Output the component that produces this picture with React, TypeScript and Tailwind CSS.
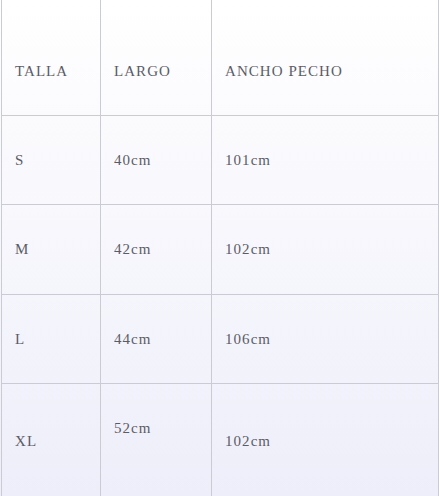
import React from "react";

type Row = { talla: string; largo: string; pecho: string; tall?: boolean };

const rows: Row[] = [
  { talla: "S", largo: "40cm", pecho: "101cm" },
  { talla: "M", largo: "42cm", pecho: "102cm" },
  { talla: "L", largo: "44cm", pecho: "106cm" },
  { talla: "XL", largo: "52cm", pecho: "102cm", tall: true },
];

const font = "font-['Liberation_Serif',serif] text-[15px] tracking-[0.07em] text-[#5c5c66]";

function Cell({
  children,
  className = "",
}: {
  children: React.ReactNode;
  className?: string;
}) {
  return (
    <div className={`flex items-center border-l border-[#cbcbd3] pl-[13px] ${className}`}>
      <span className={font}>{children}</span>
    </div>
  );
}

export default function App() {
  return (
    <div className="h-[496px] w-[439px] overflow-hidden bg-gradient-to-b from-white to-[#eeeefa]">
      <div className="ml-px grid w-[438px] grid-cols-[99px_111px_228px]">
        {/* header */}
        <Cell className="h-[116px] border-b pt-[28px]">TALLA</Cell>
        <Cell className="h-[116px] border-b pt-[28px]">LARGO</Cell>
        <Cell className="h-[116px] border-b border-r pt-[28px]">ANCHO PECHO</Cell>

        {rows.map((r, i) => {
          const h = r.tall ? "h-[114px]" : i === 1 ? "h-[90px]" : "h-[89px]";
          const b = r.tall ? "" : "border-b";
          return (
            <React.Fragment key={r.talla}>
              <Cell className={`${h} ${b}`}>{r.talla}</Cell>
              <Cell className={`${h} ${b} ${r.tall ? "pb-[26px]" : ""}`}>{r.largo}</Cell>
              <Cell className={`${h} ${b} border-r`}>{r.pecho}</Cell>
            </React.Fragment>
          );
        })}
      </div>
    </div>
  );
}
